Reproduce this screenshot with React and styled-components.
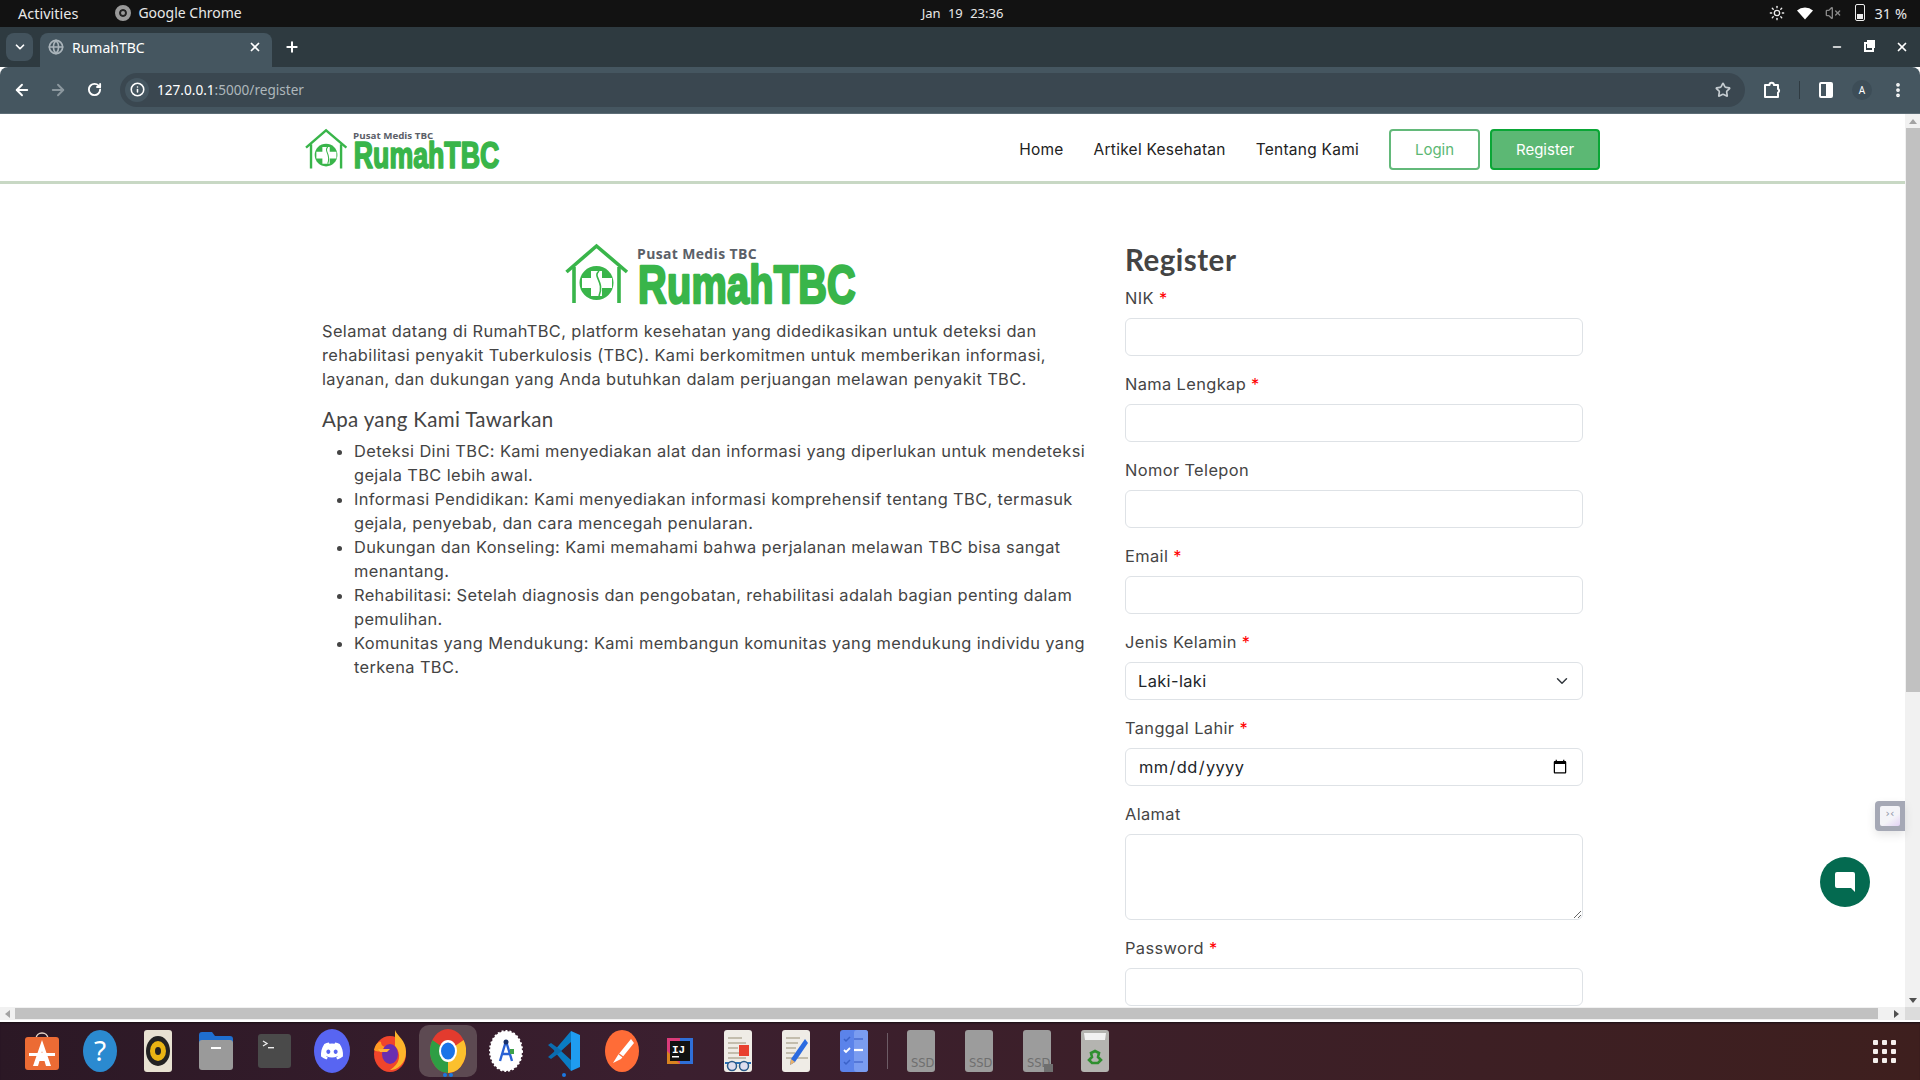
import React from 'react';
import styled, { createGlobalStyle } from 'styled-components';
import { ArrowLeft, ArrowRight, RotateCw, Info, Star, X, Plus, ChevronDown, Minus, MoreVertical, Globe, Sun, VolumeX } from 'lucide-react';
import { FaDiscord } from 'react-icons/fa';

const GlobalStyle = createGlobalStyle`
    html, body { margin: 0; padding: 0; height: 100%; overflow: hidden; }
    * { box-sizing: border-box; }
    body { font-family: "Inter", "Noto Sans", sans-serif; color: #444; background: #fff; }
`;

const Screen = styled.div`
    width: 1920px;
    height: 1080px;
    display: flex;
    flex-direction: column;
    overflow: hidden;
`;

/* ---- ubuntu top bar ---- */
const TopBar = styled.div`
    height: 27px;
    background: #121212;
    color: #e8e8e8;
    display: grid;
    grid-template-columns: 1fr auto 1fr;
    align-items: center;
    padding: 0 13px 2px 18px;
    font: 14.5px "Noto Sans", "Open Sans", sans-serif;
`;
const TopLeft = styled.div`
    display: flex;
    align-items: center;
    gap: 37px;
`;
const AppName = styled.span`
    display: flex;
    align-items: center;
    gap: 7px;
    font-size: 14px;
`;
const GreyChrome = styled.span`
    width: 16px;
    height: 16px;
    border-radius: 50%;
    background: #9a9a9a;
    border: 4px solid #9a9a9a;
    box-shadow: inset 0 0 0 2px #222;
`;
const Clock = styled.div`
    font-size: 13px;
    word-spacing: 4px;
`;
const TopRight = styled.div`
    display: flex;
    justify-content: flex-end;
    align-items: center;
    gap: 12px;
`;
const BatteryBody = styled.span`
    width: 10px;
    height: 17px;
    border: 1.5px solid #eee;
    border-radius: 2px;
    padding: 9px 1px 1px;
    margin: 0 -2px 0 2px;
    &::before { content: ''; display: block; height: 100%; background: #eee; }
`;

/* ---- browser tabs ---- */
const TabStrip = styled.div`
    height: 40px;
    background: #2e3a40;
    display: flex;
    align-items: flex-end;
    padding-left: 6px;
    color: #fff;
`;
const TabList = styled.div`
    width: 27px;
    height: 28px;
    align-self: flex-start;
    margin-top: 6px;
    background: #43535d;
    border-radius: 8px;
    display: flex;
    align-items: center;
    justify-content: center;
`;
const Tab = styled.div`
    width: 232px;
    height: 34px;
    margin-left: 7px;
    background: #455660;
    border-radius: 8px 8px 0 0;
    display: flex;
    align-items: center;
    padding: 0 10px 6px 8px;
    font: 14px "Noto Sans", sans-serif;
    gap: 8px;
`;
const TabTitle = styled.span`
    flex: 1;
`;
const NewTab = styled.div`
    width: 40px;
    height: 34px;
    padding-bottom: 6px;
    display: flex;
    align-items: center;
    justify-content: center;
`;
const WindowControls = styled.div`
    margin-left: auto;
    height: 40px;
    display: flex;
    align-items: center;
    padding: 0 2px 0 0;
`;
const WinButton = styled.div`
    width: 32.5px;
    display: flex;
    justify-content: center;
`;
const RestoreIcon = styled.span`
    width: 10px;
    height: 10px;
    border: 2px solid #fff;
    position: relative;
    &::after {
        content: '';
        position: absolute;
        left: 1px;
        top: -4px;
        width: 8px;
        height: 8px;
        background: #fff;
        box-shadow: inset 0 0 0 2px #fff;
    }
`;

/* ---- browser toolbar ---- */
const Toolbar = styled.div`
    height: 47px;
    background: #455660;
    border-radius: 8px 8px 0 0;
    display: flex;
    align-items: center;
    padding: 0 0 1px 4px;
    color: #fff;
    border-bottom: 1px solid #5d6d76;
`;
const NavButton = styled.div`
    width: 36px;
    display: flex;
    justify-content: center;
    color: ${p => (p.$dim ? '#8b979e' : '#fff')};
`;
const AddressBar = styled.div`
    width: 1625px;
    height: 34px;
    margin-left: 8px;
    background: #3a4750;
    border-radius: 17px;
    display: flex;
    align-items: center;
    padding: 0 14px 0 5px;
    font: 13.6px "Noto Sans", sans-serif;
`;
const InfoChip = styled.div`
    width: 24px;
    height: 24px;
    border-radius: 50%;
    background: #455660;
    display: flex;
    align-items: center;
    justify-content: center;
    margin-right: 8px;
`;
const Host = styled.span`
    color: #fff;
`;
const UrlRest = styled.span`
    color: #aeb7bc;
    flex: 1;
`;
const ToolbarRight = styled.div`
    flex: 1;
    display: flex;
    align-items: center;
    padding-left: 9px;
`;
const ToolSlot = styled.div`
    width: 36px;
    display: flex;
    justify-content: center;
`;
const ToolDivider = styled.div`
    width: 1px;
    height: 18px;
    background: #2f3b42;
    margin: 0 8px 0 9px;
`;
const PanelIcon = styled.span`
    width: 14px;
    height: 16px;
    border: 2px solid #fff;
    border-radius: 2px;
    background: linear-gradient(90deg, transparent 50%, #fff 50%);
`;
const Avatar = styled.span`
    width: 20px;
    height: 20px;
    border-radius: 50%;
    background: #3d4d57;
    font: 10px "Noto Sans", sans-serif;
    display: flex;
    align-items: center;
    justify-content: center;
`;

/* ---- the page with its scrollbars ---- */
const Viewport = styled.div`
    height: 908px;
    display: grid;
    grid-template-columns: 1fr 15px;
    grid-template-rows: 1fr 15px;
    position: relative;
`;
const Page = styled.div`
    overflow: hidden;
    min-height: 0;
    background: #fff;
`;
const Navbar = styled.nav`
    height: 70px;
    border-bottom: 3px solid #c8d8c4;
    display: flex;
    align-items: center;
    justify-content: space-between;
    padding: 4px 305px 0;
`;
const NavLinks = styled.div`
    display: flex;
    align-items: center;
    gap: 30px;
`;
const NavLink = styled.a`
    font-size: 15.5px;
    letter-spacing: 0.25px;
    color: #222;
`;
const Buttons = styled.div`
    display: flex;
    gap: 10px;
`;
const Button = styled.button`
    height: 41px;
    width: ${p => (p.$solid ? '110px' : '91px')};
    border-radius: 4px;
    border: 2px solid ${p => (p.$solid ? '#0aa636' : '#63b97a')};
    background: ${p => (p.$solid ? '#5cb874' : '#fff')};
    color: ${p => (p.$solid ? '#fff' : '#5cb874')};
    font: 15px "Inter", sans-serif;
`;
const Main = styled.main`
    display: grid;
    grid-template-columns: 773px 458px;
    column-gap: 30px;
    padding: 60px 0 0 322px;
`;
const About = styled.section`
    font-size: 16.4px;
    line-height: 24px;
    letter-spacing: 0.38px;
    color: #444;
`;
const BigLogo = styled.div`
    display: flex;
    padding-left: 243px;
    margin-bottom: 15px;
`;
const Paragraph = styled.p`
    margin: 0 0 16px;
`;
const SubTitle = styled.h3`
    margin: 0 0 8px;
    font: 400 20.5px/24px "Lato", sans-serif;
    letter-spacing: 0.35px;
    color: #444;
`;
const List = styled.ul`
    margin: 0;
    padding-left: 32px;
`;
const Title = styled.h2`
    margin: 0 0 10px;
    font: 700 29.5px/32px "Lato", sans-serif;
    letter-spacing: 0.5px;
    color: #444;
`;
const Field = styled.div`
    margin-bottom: 16px;
`;
const Label = styled.label`
    display: block;
    margin-bottom: 8px;
    font-size: 16.4px;
    line-height: 24px;
    letter-spacing: 0.38px;
    color: #444;
`;
const Required = styled.span`
    color: #f00;
`;
const controlStyle = `
    display: block;
    width: 100%;
    height: 38px;
    padding: 6px 12px;
    border: 1px solid #dee2e6;
    border-radius: 6px;
    background-color: #fff;
    color: #212529;
    font: 16.4px/24px "Inter", sans-serif;
    letter-spacing: 0.38px;
`;
const Input = styled.input`${controlStyle}`;
const Select = styled.select`
    ${controlStyle}
    appearance: none;
    background-image: url("data:image/svg+xml,%3csvg xmlns='http://www.w3.org/2000/svg' viewBox='0 0 16 16'%3e%3cpath fill='none' stroke='%23343a40' stroke-linecap='round' stroke-linejoin='round' stroke-width='2' d='m2 5 6 6 6-6'/%3e%3c/svg%3e");
    background-repeat: no-repeat;
    background-position: right 12px center;
    background-size: 16px 12px;
`;
const TextArea = styled.textarea`
    ${controlStyle}
    height: 86px;
`;

const VScroll = styled.div`
    grid-row: 1 / 2;
    grid-column: 2;
    background: #f1f1f1;
    display: flex;
    flex-direction: column;
    align-items: stretch;
    justify-content: space-between;
    min-height: 0;
`;
const ScrollArrow = styled.div`
    height: 14px;
    display: flex;
    align-items: center;
    justify-content: center;
    &::before {
        content: '';
        border-left: 4px solid transparent;
        border-right: 4px solid transparent;
        ${p => (p.$down ? 'border-top: 5px solid #505050;' : 'border-bottom: 5px solid #a3a3a3;')}
    }
`;
const VThumb = styled.div`
    flex: 0 0 564px;
    margin-bottom: auto;
    margin-left: 1px;
    background: #c1c1c1;
`;
const HScroll = styled.div`
    grid-column: 1;
    grid-row: 2;
    background: #f1f1f1;
    display: flex;
    align-items: center;
    height: 15px;
    border-bottom: 2px solid #fff;
`;
const HArrow = styled.div`
    width: 15px;
    display: flex;
    justify-content: center;
    margin-left: ${p => (p.$right ? 'auto' : '0')};
    padding-right: ${p => (p.$right ? '2px' : '0')};
    &::before {
        content: '';
        border-top: 4px solid transparent;
        border-bottom: 4px solid transparent;
        ${p => (p.$right ? 'border-left: 5px solid #505050;' : 'border-right: 5px solid #a3a3a3;')}
    }
`;
const HThumb = styled.div`
    width: 1863px;
    height: 11px;
    margin-top: -1px;
    background: #c1c1c1;
`;
const ScrollCorner = styled.div`
    background: #dcdcdc;
    border-bottom: 2px solid #fff;
`;

const SideWidget = styled.div`
    position: absolute;
    right: 15px;
    top: 687px;
    width: 30px;
    height: 30px;
    background: #a5a8b5;
    border-radius: 4px 0 0 4px;
    display: flex;
    align-items: center;
    justify-content: center;
    box-shadow: 0 4px 10px rgba(0, 0, 0, .1);
`;
const WidgetFace = styled.div`
    width: 20px;
    height: 20px;
    border-radius: 2px;
    background: linear-gradient(145deg, #f4f4f8 60%, #e3d2f5);
    color: #8e95a5;
    font: 11px/15px "DejaVu Sans", sans-serif;
    text-align: center;
`;
const ChatFab = styled.div`
    position: absolute;
    left: 1820px;
    top: 743px;
    width: 50px;
    height: 50px;
    border-radius: 50%;
    background: #046a50;
    display: flex;
    align-items: center;
    justify-content: center;
`;

/* ---- dock ---- */
const Dock = styled.div`
    height: 58px;
    flex: 1;
    background: linear-gradient(90deg, #2b1825 0%, #3b1f2f 35%, #3e1f1e 100%);
    display: flex;
    align-items: center;
    padding-left: 13px;
    box-shadow: inset 0 2px 2px -1px #1a0f15;
`;
const DockItem = styled.div`
    width: 58px;
    height: 52px;
    display: flex;
    align-items: center;
    justify-content: center;
    position: relative;
    border-radius: 10px;
    background: ${p => (p.$active ? '#5d4a52' : 'transparent')};
`;
const RunDots = styled.div`
    position: absolute;
    bottom: 0;
    left: 0;
    right: 0;
    display: flex;
    justify-content: center;
    gap: 2px;
    &::before, &::after {
        content: '';
        width: 4px;
        height: 4px;
        border-radius: 50%;
        background: #1b78e2;
    }
    ${p => (p.$single ? '&::after { display: none; }' : '')}
`;
const DockDivider = styled.div`
    width: 1px;
    height: 36px;
    margin: 0 4px;
    background: #6d5c66;
`;
const AppGrid = styled.div`
    margin-left: auto;
    margin-right: 24px;
    display: grid;
    grid-template-columns: repeat(3, 5px);
    gap: 4px;
`;
const AppDot = styled.span`
    width: 5px;
    height: 5px;
    background: #f5f0ee;
    border-radius: 1px;
`;

const LogoBox = styled.svg`
    display: block;
    flex: none;
    overflow: visible;
`;

/* logo is one drawing, scaled for navbar and page */
const Logo = ({ width }) => (
    <LogoBox width={width} height={width * 60 / 292} viewBox="0 0 292 60">
        <g fill="none" stroke="#39b54a" strokeWidth="3.6">
            <path d="M1.5 28 31.5 2 62 28" strokeLinejoin="miter" />
            <path d="M9 23V59M54 23V59" />
        </g>
        <circle cx="31.5" cy="39" r="17" fill="#39b54a" />
        <path d="M26 27h11v7h10v10H37v8H26v-8H17V34h9z" fill="#fff" />
        <path d="M34 27c-7 6 6 10 0 25" fill="none" stroke="#39b54a" strokeWidth="1.6" />
        <text x="72" y="15" fill="#5b6068" fontFamily="Open Sans" fontWeight="700" fontSize="14" textLength="120" lengthAdjust="spacingAndGlyphs">Pusat Medis TBC</text>
        <text x="73" y="58.5" fill="#39b54a" stroke="#39b54a" strokeWidth="2.6" strokeLinejoin="round" fontFamily="Liberation Sans" fontWeight="700" fontSize="54" textLength="218" lengthAdjust="spacingAndGlyphs">RumahTBC</text>
    </LogoBox>
);

const PuzzleIcon = () => (
    <svg width="18" height="18" viewBox="0 0 18 18">
        <path d="M2 4h4.5a2.2 2.2 0 0 1 4.4 0H15v4a2 2 0 0 1 0 3.6V16H2z" fill="none" stroke="#fff" strokeWidth="2" strokeLinejoin="round" />
    </svg>
);
const WifiIcon = () => (
    <svg width="16" height="16" viewBox="0 0 16 16">
        <path d="M0 5.5a12 12 0 0 1 16 0L8 14.5z" fill="#fff" />
    </svg>
);
const AppStoreIcon = () => (
    <svg width="36" height="40" viewBox="0 0 36 40">
        <path d="M12 8c0-8 12-8 12 0" fill="none" stroke="#e6d5c8" strokeWidth="1.5" />
        <rect x="1" y="6" width="34" height="33" rx="3" fill="#ec6b34" />
        <path d="M18 9 9 35h5l1.5-5h5L22 35h5zM17 25l1-5 1 5z" fill="#fff" />
        <rect x="5" y="22" width="26" height="3" fill="#fff" />
    </svg>
);
const HelpIcon = () => (
    <svg width="34" height="42" viewBox="0 0 34 42">
        <ellipse cx="17" cy="21" rx="17" ry="21" fill="#2b8ad0" />
        <text x="17" y="31" fill="#fff" fontFamily="Noto Sans" fontSize="28" textAnchor="middle">?</text>
    </svg>
);
const RhythmIcon = () => (
    <svg width="28" height="42" viewBox="0 0 28 42">
        <rect width="28" height="42" rx="3" fill="#e8e2d2" />
        <ellipse cx="14" cy="21" rx="12" ry="15" fill="#222" />
        <ellipse cx="14" cy="21" rx="8" ry="10" fill="#e9b413" />
        <ellipse cx="14" cy="21" rx="3" ry="4" fill="#222" />
    </svg>
);
const FilesIcon = () => (
    <svg width="34" height="38" viewBox="0 0 34 38">
        <path d="M0 3a3 3 0 0 1 3-3h10l3 4h15a3 3 0 0 1 3 3v8H0z" fill="#1f6fd0" />
        <rect y="8" width="34" height="30" rx="3" fill="#9a9a9a" />
        <rect x="12" y="15" width="10" height="2" fill="#fff" />
    </svg>
);
const TerminalIcon = () => (
    <svg width="33" height="34" viewBox="0 0 33 34">
        <rect width="33" height="34" rx="3" fill="#4a4a4a" />
        <path d="M5 7l4 2.5L5 12" fill="none" stroke="#eee" strokeWidth="1.3" />
        <rect x="10" y="13" width="6" height="1.4" fill="#eee" />
    </svg>
);
const DiscordBadge = styled.span`
    width: 36px;
    height: 44px;
    border-radius: 50%;
    background: #5865f2;
    display: flex;
    align-items: center;
    justify-content: center;
`;
const DiscordIcon = () => (
    <DiscordBadge>
        <FaDiscord size={24} color="#fff" />
    </DiscordBadge>
);
const FirefoxIcon = () => (
    <svg width="34" height="42" viewBox="0 0 34 42">
        <ellipse cx="17" cy="24" rx="16" ry="18" fill="#f0452c" />
        <path d="M22 0c2 6 11 10 11 22S24 40 17 40c10-6 12-16 5-24z" fill="#fdb52a" />
        <path d="M1 20c2-8 6-9 7-8 0 3 2 5 6 5-3 1-5 2-6 4-3 1-6 0-7-1z" fill="#ff9a22" />
        <ellipse cx="17" cy="24" rx="8" ry="10" fill="#6a2fb0" />
        <path d="M5 19h12l-3 3H7z" fill="#ffb23a" />
    </svg>
);
const ChromeIcon = () => (
    <svg width="36" height="44" viewBox="0 0 36 44">
        <g transform="scale(1 1.222)">
            <circle cx="18" cy="18" r="18" fill="#e33b2e" />
            <path d="M18 18 33.6 9A18 18 0 0 1 18 36z" fill="#fbc02d" />
            <path d="M18 18 18 36A18 18 0 0 1 2.4 9z" fill="#2e9e44" />
            <circle cx="18" cy="18" r="9" fill="#fff" />
            <circle cx="18" cy="18" r="7" fill="#1a73e8" />
        </g>
    </svg>
);
const StudioIcon = () => (
    <svg width="34" height="42" viewBox="0 0 34 42">
        <ellipse cx="17" cy="21" rx="16" ry="20" fill="#fff" stroke="#fff" strokeDasharray="2 2" strokeWidth="2" />
        <path d="M17 11 11 31M17 11l6 20M13 24h8" fill="none" stroke="#2a62d4" strokeWidth="2.4" />
        <circle cx="17" cy="12" r="2.5" fill="#17316e" />
        <rect x="21" y="19" width="4" height="5" fill="#3ea14a" />
    </svg>
);
const VsCodeIcon = () => (
    <svg width="32" height="40" viewBox="0 0 32 40">
        <path d="M23 0 32 4V36L23 40z" fill="#1f9cf0" />
        <path d="M23 0 6 20l17 20V29L13 20l10-9z" fill="#0a7cc4" />
        <path d="M0 14l3-2 11 8-11 8-3-2 7-6z" fill="#0a6cb0" />
    </svg>
);
const PostmanIcon = () => (
    <svg width="34" height="42" viewBox="0 0 34 42">
        <ellipse cx="17" cy="21" rx="17" ry="21" fill="#ff6c37" />
        <path d="M26 9 13 25l-5 8 8-4L29 13z" fill="#fff" />
        <path d="M14 24l4 3" stroke="#ff6c37" strokeWidth="1.2" />
    </svg>
);
const IdeaIcon = () => (
    <svg width="26" height="26" viewBox="0 0 26 26">
        <rect width="26" height="26" fill="#db3b7a" />
        <path d="M26 0V26H13V0z" fill="#2f6fd8" />
        <path d="M0 13V26H13z" fill="#d9831f" />
        <rect x="3" y="3" width="20" height="20" fill="#111" />
        <text x="5" y="15" fill="#fff" fontFamily="Liberation Mono" fontWeight="700" fontSize="11">IJ</text>
        <rect x="5" y="18" width="7" height="1.5" fill="#fff" />
    </svg>
);
const ReaderIcon = () => (
    <svg width="28" height="42" viewBox="0 0 28 42">
        <rect width="28" height="42" rx="3" fill="#efece6" />
        <path d="M4 8h14M4 13h18M4 18h10M4 23h12M4 28h18" stroke="#b5ad9b" strokeWidth="1.4" />
        <rect x="15" y="15" width="10" height="11" fill="#e8402f" />
        <path d="M1 33h26" stroke="#2a70b8" strokeWidth="2" />
        <circle cx="8" cy="36" r="4.5" fill="#dde" stroke="#2a5a88" strokeWidth="1.5" />
        <circle cx="20" cy="36" r="4.5" fill="#dde" stroke="#2a5a88" strokeWidth="1.5" />
    </svg>
);
const EditorIcon = () => (
    <svg width="28" height="42" viewBox="0 0 28 42">
        <rect width="28" height="42" rx="3" fill="#efece6" />
        <path d="M4 8h14M4 13h12M4 18h10M4 23h9M4 28h22" stroke="#b5ad9b" strokeWidth="1.4" />
        <path d="M23 9l3 4-13 19-5 3 1-6z" fill="#2a6ae0" />
        <path d="M8 35l1-6 4 3z" fill="#e9b26a" />
    </svg>
);
const TasksIcon = () => (
    <svg width="28" height="42" viewBox="0 0 28 42">
        <rect width="28" height="42" rx="3" fill="#5b83ea" />
        <rect x="14" width="14" height="42" rx="3" fill="#7a9cf0" />
        <path d="M4 9l2 2 4-4M4 32l2 2 4-4" fill="none" stroke="#3b62c8" strokeWidth="1.5" />
        <path d="M4 20l2 2 4-4" fill="none" stroke="#fff" strokeWidth="1.8" />
        <path d="M14 9h9M14 32h9" stroke="#4a6cd0" strokeWidth="1.5" />
        <path d="M14 20h9" stroke="#fff" strokeWidth="2.2" />
    </svg>
);
const SsdIcon = ({ locked }) => (
    <svg width="28" height="42" viewBox="0 0 28 42" overflow="visible">
        <rect width="28" height="42" rx="3" fill="#9c9c9c" />
        <text x="4" y="37" fill="#6f6f6f" fontFamily="DejaVu Sans" fontSize="11.5">SSD</text>
        {locked && <rect x="21" y="34" width="9" height="8" fill="#6f6f6f" />}
    </svg>
);
const TrashIcon = () => (
    <svg width="28" height="42" viewBox="0 0 28 42">
        <rect width="28" height="42" rx="3" fill="#b4b4b0" />
        <path d="M3 3h22l-1 7H4z" fill="#f2f2f2" />
        <path d="M14 21l4 2-1 4 3 3-3 3h-6l-3-3 3-3-1-4z" fill="none" stroke="#2f8f2f" strokeWidth="2.6" />
    </svg>
);

const dockBefore = [
    [AppStoreIcon], [HelpIcon], [RhythmIcon], [FilesIcon], [TerminalIcon], [DiscordIcon], [FirefoxIcon],
];
const dockAfter = [[StudioIcon], [VsCodeIcon, true], [PostmanIcon], [IdeaIcon], [ReaderIcon], [EditorIcon], [TasksIcon]];

const fields = [
    { label: 'NIK', required: true },
    { label: 'Nama Lengkap', required: true },
    { label: 'Nomor Telepon' },
    { label: 'Email', required: true, type: 'email' },
];

const offers = [
    'Deteksi Dini TBC: Kami menyediakan alat dan informasi yang diperlukan untuk mendeteksi gejala TBC lebih awal.',
    'Informasi Pendidikan: Kami menyediakan informasi komprehensif tentang TBC, termasuk gejala, penyebab, dan cara mencegah penularan.',
    'Dukungan dan Konseling: Kami memahami bahwa perjalanan melawan TBC bisa sangat menantang.',
    'Rehabilitasi: Setelah diagnosis dan pengobatan, rehabilitasi adalah bagian penting dalam pemulihan.',
    'Komunitas yang Mendukung: Kami membangun komunitas yang mendukung individu yang terkena TBC.',
];

const FormLabel = ({ children, required }) => (
    <Label>
        {children}
        {required && <Required> *</Required>}
    </Label>
);

const App = () => {
    return (
        <Screen>
            <GlobalStyle />
            <TopBar>
                <TopLeft>
                    <span>Activities</span>
                    <AppName><GreyChrome />Google Chrome</AppName>
                </TopLeft>
                <Clock>Jan 19 23:36</Clock>
                <TopRight>
                    <Sun size={16} color="#eee" />
                    <WifiIcon />
                    <VolumeX size={16} color="#888" />
                    <BatteryBody />
                    <span>31 %</span>
                </TopRight>
            </TopBar>
            <TabStrip>
                <TabList><ChevronDown size={14} strokeWidth={3} /></TabList>
                <Tab>
                    <Globe size={16} color="#aab4ba" strokeWidth={2.5} />
                    <TabTitle>RumahTBC</TabTitle>
                    <X size={14} strokeWidth={3} />
                </Tab>
                <NewTab><Plus size={16} strokeWidth={3} /></NewTab>
                <WindowControls>
                    <WinButton><Minus size={12} strokeWidth={3} /></WinButton>
                    <WinButton><RestoreIcon /></WinButton>
                    <WinButton><X size={14} strokeWidth={3} /></WinButton>
                </WindowControls>
            </TabStrip>
            <Toolbar>
                <NavButton><ArrowLeft size={18} strokeWidth={2.5} /></NavButton>
                <NavButton $dim><ArrowRight size={18} strokeWidth={2.5} /></NavButton>
                <NavButton><RotateCw size={15} strokeWidth={3} /></NavButton>
                <AddressBar>
                    <InfoChip><Info size={15} strokeWidth={2.5} /></InfoChip>
                    <Host>127.0.0.1</Host>
                    <UrlRest>:5000/register</UrlRest>
                    <Star size={16} color="#c5ccd0" strokeWidth={2.5} />
                </AddressBar>
                <ToolbarRight>
                    <ToolSlot><PuzzleIcon /></ToolSlot>
                    <ToolDivider />
                    <ToolSlot><PanelIcon /></ToolSlot>
                    <ToolSlot><Avatar>A</Avatar></ToolSlot>
                    <ToolSlot><MoreVertical size={18} strokeWidth={3} /></ToolSlot>
                </ToolbarRight>
            </Toolbar>
            <Viewport>
                <Page>
                    <Navbar>
                        <Logo width={195} />
                        <NavLinks>
                            <NavLink>Home</NavLink>
                            <NavLink>Artikel Kesehatan</NavLink>
                            <NavLink>Tentang Kami</NavLink>
                            <Buttons>
                                <Button>Login</Button>
                                <Button $solid>Register</Button>
                            </Buttons>
                        </NavLinks>
                    </Navbar>
                    <Main>
                        <About>
                            <BigLogo><Logo width={292} /></BigLogo>
                            <Paragraph>
                                Selamat datang di RumahTBC, platform kesehatan yang didedikasikan untuk deteksi dan rehabilitasi penyakit Tuberkulosis (TBC). Kami berkomitmen untuk memberikan informasi, layanan, dan dukungan yang Anda butuhkan dalam perjuangan melawan penyakit TBC.
                            </Paragraph>
                            <SubTitle>Apa yang Kami Tawarkan</SubTitle>
                            <List>
                                {offers.map(o => <li key={o}>{o}</li>)}
                            </List>
                        </About>
                        <form>
                            <Title>Register</Title>
                            {fields.map(f => (
                                <Field key={f.label}>
                                    <FormLabel required={f.required}>{f.label}</FormLabel>
                                    <Input type={f.type || 'text'} />
                                </Field>
                            ))}
                            <Field>
                                <FormLabel required>Jenis Kelamin</FormLabel>
                                <Select defaultValue="Laki-laki">
                                    <option>Laki-laki</option>
                                    <option>Perempuan</option>
                                </Select>
                            </Field>
                            <Field>
                                <FormLabel required>Tanggal Lahir</FormLabel>
                                <Input type="date" />
                            </Field>
                            <Field>
                                <FormLabel>Alamat</FormLabel>
                                <TextArea />
                            </Field>
                            <Field>
                                <FormLabel required>Password</FormLabel>
                                <Input type="password" />
                            </Field>
                        </form>
                    </Main>
                </Page>
                <VScroll>
                    <ScrollArrow />
                    <VThumb />
                    <ScrollArrow $down />
                </VScroll>
                <HScroll>
                    <HArrow />
                    <HThumb />
                    <HArrow $right />
                </HScroll>
                <ScrollCorner />
                <SideWidget><WidgetFace>›‹</WidgetFace></SideWidget>
                <ChatFab>
                    <svg width="22" height="22" viewBox="0 0 22 22">
                        <path d="M3 1h16a2 2 0 0 1 2 2v18l-4-4H3a2 2 0 0 1-2-2V3a2 2 0 0 1 2-2z" fill="#fff" />
                    </svg>
                </ChatFab>
            </Viewport>
            <Dock>
                {dockBefore.map(([Icon], i) => <DockItem key={i}><Icon /></DockItem>)}
                <DockItem $active><ChromeIcon /><RunDots /></DockItem>
                {dockAfter.map(([Icon, running], i) => (
                    <DockItem key={i}><Icon />{running && <RunDots $single />}</DockItem>
                ))}
                <DockDivider />
                <DockItem><SsdIcon /></DockItem>
                <DockItem><SsdIcon /></DockItem>
                <DockItem><SsdIcon locked /></DockItem>
                <DockItem><TrashIcon /></DockItem>
                <AppGrid>
                    {Array.from({ length: 9 }, (_, i) => <AppDot key={i} />)}
                </AppGrid>
            </Dock>
        </Screen>
    );
};

export default App;
